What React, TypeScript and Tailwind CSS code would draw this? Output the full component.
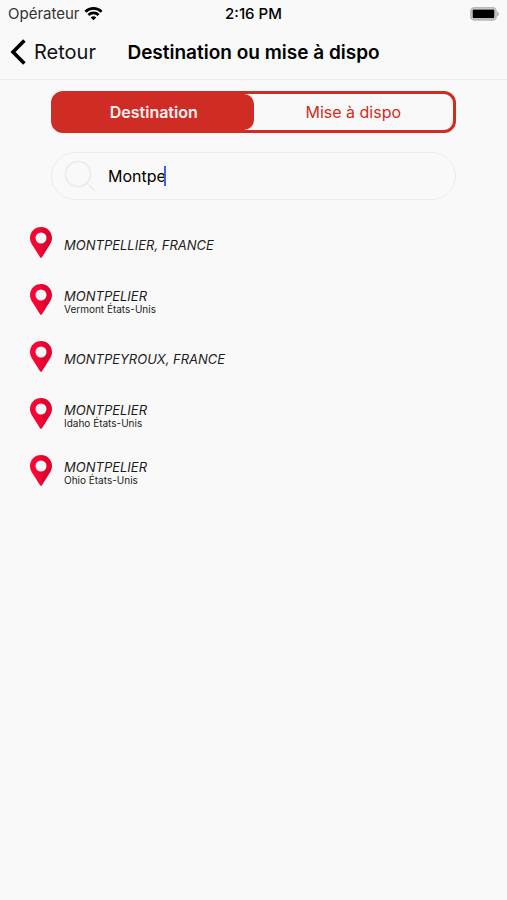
import { useState } from "react";

type Place = { name: string; detail?: string };

const places: Place[] = [
  { name: "MONTPELLIER, FRANCE" },
  { name: "MONTPELIER", detail: "Vermont États-Unis" },
  { name: "MONTPEYROUX, FRANCE" },
  { name: "MONTPELIER", detail: "Idaho États-Unis" },
  { name: "MONTPELIER", detail: "Ohio États-Unis" },
];

function WifiIcon() {
  return (
    <svg width="19" height="14" viewBox="0 0 18 14" fill="none" stroke="#000" strokeWidth="2.6" aria-hidden="true">
      <path d="M0.9 4.7A11.6 11.6 0 0 1 17.1 4.7" />
      <path d="M3.9 8A7.3 7.3 0 0 1 14.1 8" />
      <path d="M9 13.2L6.2 10.5A4 4 0 0 1 11.8 10.5Z" fill="#000" stroke="none" />
    </svg>
  );
}

function BatteryIcon() {
  return (
    <svg width="30" height="14" viewBox="0 0 30 14" aria-hidden="true">
      <rect x="2" y="0.9" width="25" height="12" rx="3.4" fill="#f9f9f9" stroke="#b8b8b8" strokeWidth="1.8" />
      <rect x="3.6" y="2.5" width="21.8" height="8.8" rx="1.2" fill="#000" />
      <path d="M28.1 4.5C30.5 5.3 30.5 8.5 28.1 9.3Z" fill="#b0b0b0" />
    </svg>
  );
}

function PinIcon() {
  return (
    <svg width="22" height="31" viewBox="0 0 22 31" className="shrink-0" aria-hidden="true">
      <defs>
        <linearGradient id="pin" x1="0" x2="1" y1="0" y2="0">
          <stop offset="0.45" stopColor="#f80536" />
          <stop offset="0.6" stopColor="#e2022f" />
        </linearGradient>
      </defs>
      <path
        fill="url(#pin)"
        fillRule="evenodd"
        d="M11 0C4.9 0 0 4.9 0 11C0 13.2 0.6 15.1 1.7 16.9L10.2 30.4C10.6 31 11.4 31 11.8 30.4L20.3 16.9C21.4 15.1 22 13.2 22 11C22 4.9 17.1 0 11 0ZM11 5.5A5.5 5.5 0 1 1 11 16.5A5.5 5.5 0 1 1 11 5.5Z"
      />
    </svg>
  );
}

export default function App() {
  const [tab, setTab] = useState<"destination" | "dispo">("destination");
  const [query, setQuery] = useState("Montpe");
  const on = "bg-[#d02c26] font-semibold text-[#fdf3f2]";
  const off = "text-[#d02c26]";

  return (
    <div className="min-h-screen bg-[#f9f9f9] font-['Inter','Liberation_Sans',sans-serif] text-black">
      <header className="border-b border-[#ececec]">
        <div className="grid h-7 grid-cols-3 items-center px-2 text-[15px]">
          <div className="flex items-center gap-1 text-[#333]">
            Opérateur
            <WifiIcon />
          </div>
          <div className="text-center font-medium">2:16 PM</div>
          <div className="flex justify-end">
            <BatteryIcon />
          </div>
        </div>
        <div className="grid h-[51px] grid-cols-[1fr_auto_1fr] items-center pb-1">
          <button type="button" className="flex items-center gap-2 pl-2.5 text-xl text-[#111]">
            <svg width="16" height="26" viewBox="0 0 16 26" fill="none" stroke="#000" strokeWidth="3.6" aria-hidden="true">
              <path d="M14.4 1.4L3 13L14.4 24.6" />
            </svg>
            Retour
          </button>
          <h1 className="pt-1 text-[19px] font-semibold">Destination ou mise à dispo</h1>
        </div>
      </header>

      <main>
        <div className="mx-[51px] mt-[11px] flex h-[42px] rounded-xl border-3 border-[#d02c26] text-base">
          <button
            type="button"
            aria-pressed={tab === "destination"}
            onClick={() => setTab("destination")}
            className={`flex-1 rounded-l-md rounded-r-[10px] ${tab === "destination" ? on : off}`}
          >
            Destination
          </button>
          <button
            type="button"
            aria-pressed={tab === "dispo"}
            onClick={() => setTab("dispo")}
            className={`flex-1 rounded-l-[10px] rounded-r-md ${tab === "dispo" ? on : off}`}
          >
            Mise à dispo
          </button>
        </div>

        <label className="mx-[51px] mt-[19px] flex h-12 items-center rounded-full border border-[#ececec] pl-3 text-base">
          <svg width="32" height="32" viewBox="0 0 32 32" fill="none" stroke="#ebebeb" strokeWidth="1.6" className="mr-3 shrink-0" aria-hidden="true">
            <circle cx="14" cy="14" r="12.5" />
            <path d="M23 23L31 31" />
          </svg>
          <input
            type="text"
            aria-label="Destination"
            value={query}
            onChange={(e) => setQuery(e.target.value)}
            className="field-sizing-content bg-transparent caret-transparent outline-none"
          />
          <span className="-ml-0.5 h-5 w-0.5 bg-[#3f66e0]" />
        </label>

        <ul className="mt-3.5 pl-[30px]">
          {places.map((place, i) => (
            <li key={i} className="h-[57px]">
              <button type="button" className="flex h-full w-full items-center gap-3 text-left">
                <PinIcon />
                <span className="flex flex-col pt-1">
                  <span className="text-[13px] leading-[14px] text-[#1c1c1c] italic">{place.name}</span>
                  {place.detail && <span className="text-[10px] leading-3 text-[#222]">{place.detail}</span>}
                </span>
              </button>
            </li>
          ))}
        </ul>
      </main>
    </div>
  );
}
